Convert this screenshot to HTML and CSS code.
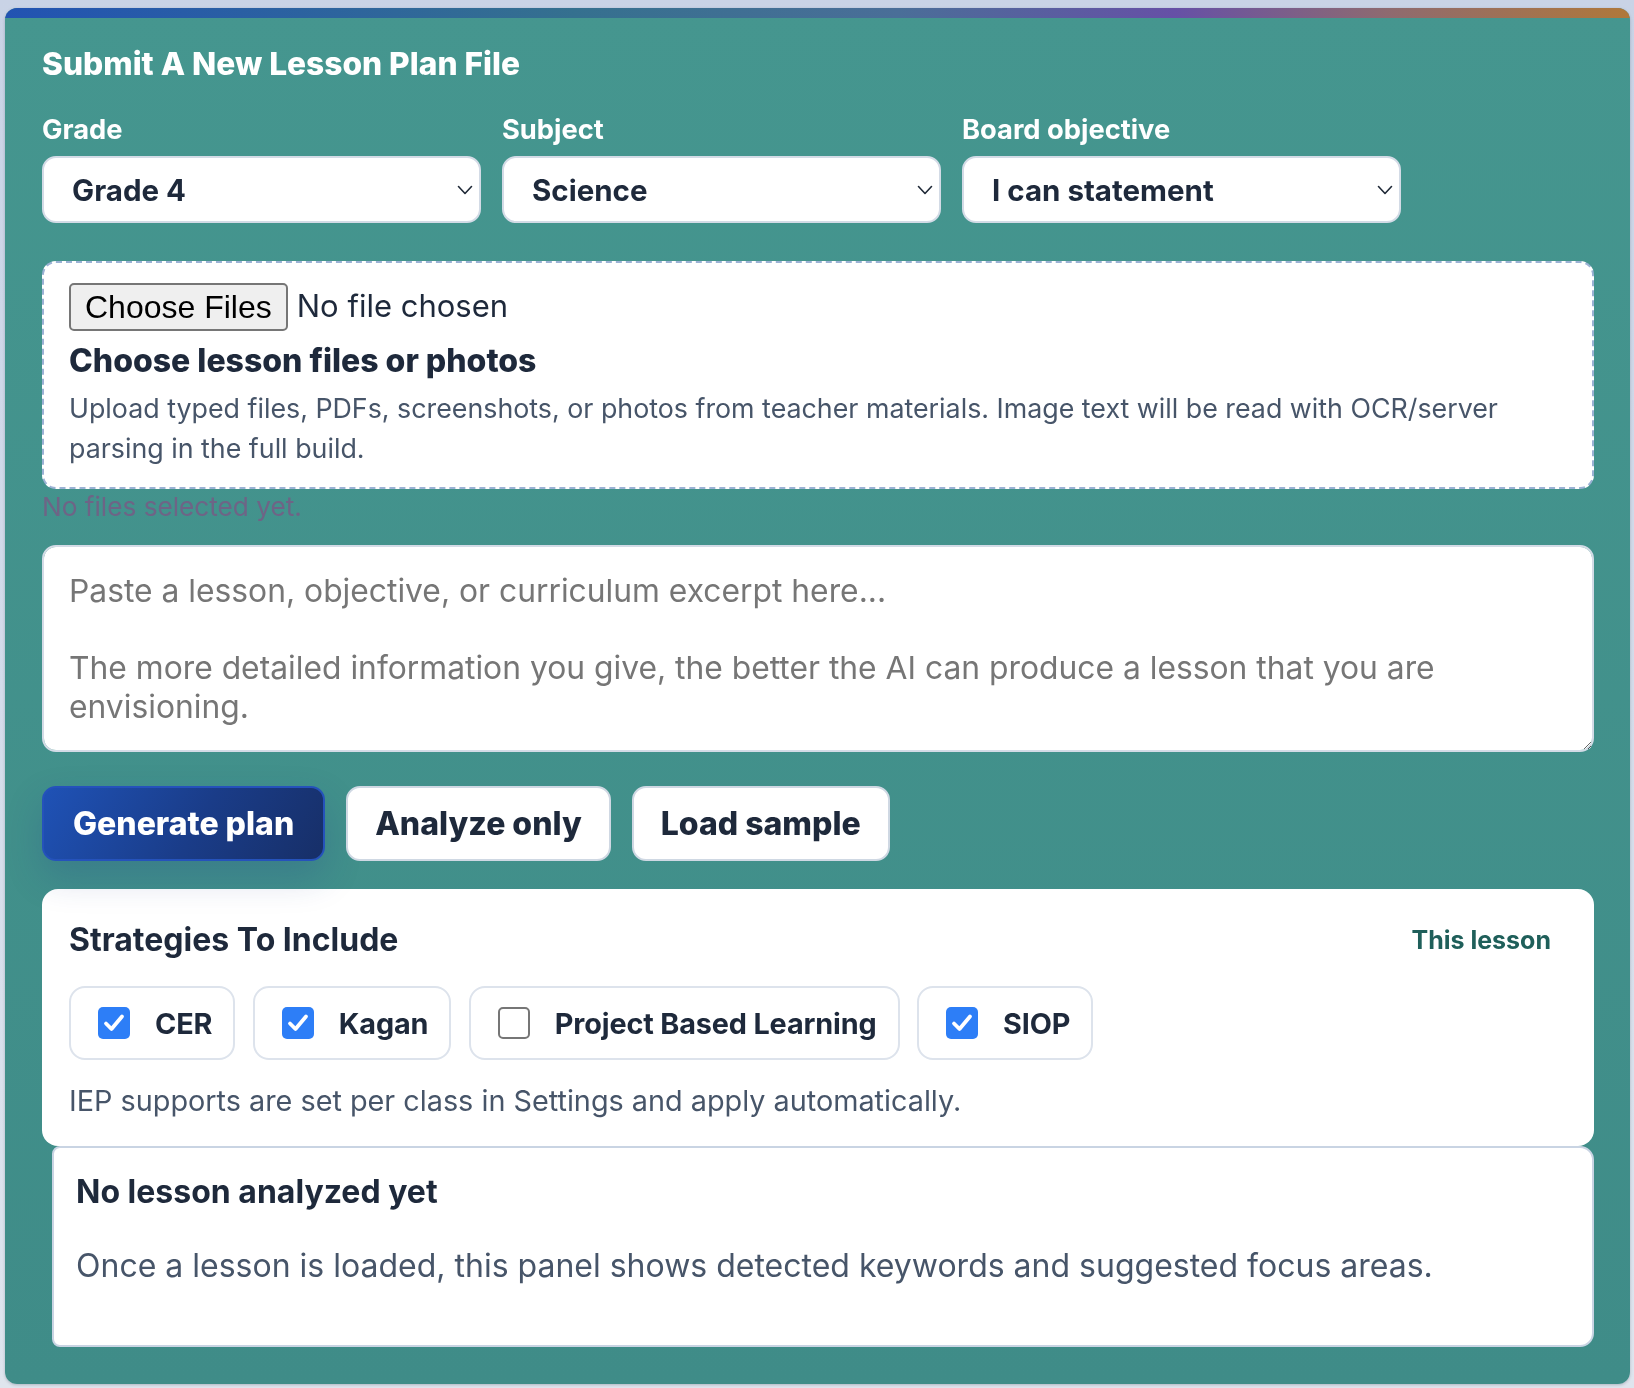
FILE: index.html
```html
<!DOCTYPE html>
<html lang="en">
<head>
<meta charset="utf-8">
<title>Submit A New Lesson Plan File</title>
<link rel="stylesheet" href="styles.css">
</head>
<body>
<main class="card">
  <div class="card-bar"></div>
  <div class="card-body">
    <h2 class="card-title">Submit A New Lesson Plan File</h2>

    <div class="field-row">
      <label class="field">
        <span class="field-label">Grade</span>
        <span class="select-wrap">
          <select class="select"><option>Grade 4</option></select>
          <svg class="chev" viewBox="0 0 16 10" width="16" height="10"><path d="M1.5 1.5 L8 8.5 L14.5 1.5" fill="none" stroke="#1f2937" stroke-width="1.6" stroke-linecap="round" stroke-linejoin="round"/></svg>
        </span>
      </label>
      <label class="field">
        <span class="field-label">Subject</span>
        <span class="select-wrap">
          <select class="select"><option>Science</option></select>
          <svg class="chev" viewBox="0 0 16 10" width="16" height="10"><path d="M1.5 1.5 L8 8.5 L14.5 1.5" fill="none" stroke="#1f2937" stroke-width="1.6" stroke-linecap="round" stroke-linejoin="round"/></svg>
        </span>
      </label>
      <label class="field">
        <span class="field-label">Board objective</span>
        <span class="select-wrap">
          <select class="select"><option>I can statement</option></select>
          <svg class="chev" viewBox="0 0 16 10" width="16" height="10"><path d="M1.5 1.5 L8 8.5 L14.5 1.5" fill="none" stroke="#1f2937" stroke-width="1.6" stroke-linecap="round" stroke-linejoin="round"/></svg>
        </span>
      </label>
    </div>

    <div class="dropzone">
      <div class="file-row">
        <span class="file-btn">Choose Files</span>
        <span class="file-name">No file chosen</span>
      </div>
      <h3 class="drop-title">Choose lesson files or photos</h3>
      <p class="drop-text">Upload typed files, PDFs, screenshots, or photos from teacher materials. Image text will be read with OCR/server parsing in the full build.</p>
    </div>
    <p class="file-status">No files selected yet.</p>

    <textarea class="lesson-text" placeholder="Paste a lesson, objective, or curriculum excerpt here...&#10;&#10;The more detailed information you give, the better the AI can produce a lesson that you are envisioning."></textarea>

    <div class="actions">
      <button class="btn btn-primary">Generate plan</button>
      <button class="btn">Analyze only</button>
      <button class="btn">Load sample</button>
    </div>

    <section class="panel strategies">
      <div class="panel-head">
        <h3 class="panel-title">Strategies To Include</h3>
        <span class="scope">This lesson</span>
      </div>
      <div class="chips">
        <label class="chip"><span class="box checked"><svg viewBox="0 0 32 32" width="32" height="32"><path d="M8 16.5 L13.5 22 L24 9.5" fill="none" stroke="#fff" stroke-width="3.8" stroke-linecap="round" stroke-linejoin="round"/></svg></span><span class="chip-text">CER</span></label>
        <label class="chip"><span class="box checked"><svg viewBox="0 0 32 32" width="32" height="32"><path d="M8 16.5 L13.5 22 L24 9.5" fill="none" stroke="#fff" stroke-width="3.8" stroke-linecap="round" stroke-linejoin="round"/></svg></span><span class="chip-text">Kagan</span></label>
        <label class="chip"><span class="box"></span><span class="chip-text">Project Based Learning</span></label>
        <label class="chip"><span class="box checked"><svg viewBox="0 0 32 32" width="32" height="32"><path d="M8 16.5 L13.5 22 L24 9.5" fill="none" stroke="#fff" stroke-width="3.8" stroke-linecap="round" stroke-linejoin="round"/></svg></span><span class="chip-text">SIOP</span></label>
      </div>
      <p class="note">IEP supports are set per class in Settings and apply automatically.</p>
    </section>

    <section class="panel results">
      <h3 class="results-title">No lesson analyzed yet</h3>
      <p class="results-text">Once a lesson is loaded, this panel shows detected keywords and suggested focus areas.</p>
    </section>
  </div>
</main>
</body>
</html>
```

FILE: styles.css
```css
* { box-sizing: border-box; }

html, body { height: 100%; }

body {
  margin: 0;
  padding: 8px 4px 5px 5px;
  background: linear-gradient(180deg, #c9d3e6 0%, #dfe5ee 100%);
  font-family: Inter, "Noto Sans", sans-serif;
  color: #1e293b;
}

.card {
  display: block;
  width: 1625px;
  border-radius: 12px;
  overflow: hidden;
  background: linear-gradient(180deg, #45968f 0%, #3f8c88 100%);
  box-shadow: 0 1px 3px rgba(30, 41, 59, 0.25);
}

.card-bar {
  height: 10px;
  background: linear-gradient(90deg, #2253b2 0%, #35708f 35%, #4a6e98 55%, #6650a6 72%, #8e6a70 85%, #b0783a 100%);
}

.card-body {
  padding: 29px 36px 37px 37px;
}

.card-title {
  margin: 0;
  font-size: 31.7px;
  line-height: 34px;
  font-weight: 800;
  color: #ffffff;
}

.field-row {
  display: grid;
  grid-template-columns: repeat(3, 439px);
  column-gap: 21px;
  margin-top: 34px;
}

.field {
  display: flex;
  flex-direction: column;
  gap: 12px;
}

.field-label {
  font-size: 27.3px;
  line-height: 29px;
  font-weight: 700;
  color: #ffffff;
}

.select-wrap {
  position: relative;
  display: block;
}

.select {
  appearance: none;
  -webkit-appearance: none;
  width: 100%;
  height: 67px;
  padding: 0 40px 0 28px;
  border: 2px solid #d3dbe6;
  border-radius: 14px;
  background: #ffffff;
  font-family: Inter, "Noto Sans", sans-serif;
  font-size: 29.5px;
  font-weight: 700;
  color: #1e293b;
}

.chev {
  position: absolute;
  right: 8px;
  top: 29px;
  pointer-events: none;
}

.dropzone {
  margin-top: 38px;
  padding: 20px 25px 19px 25px;
  border: 2px dashed #9bb2d4;
  border-radius: 14px;
  background: #ffffff;
}

.file-row {
  display: flex;
  align-items: center;
  gap: 9px;
  height: 48px;
}

.file-btn {
  display: inline-flex;
  align-items: center;
  height: 48px;
  padding: 0 14px;
  border: 2px solid #767676;
  border-radius: 5px;
  background: #efefef;
  font-family: "Liberation Sans", Arial, sans-serif;
  font-size: 32px;
  color: #000000;
}

.file-name {
  font-size: 31px;
  line-height: 40px;
  margin-top: -3px;
  color: #1e293b;
}

.drop-title {
  margin: 13px 0 0;
  font-size: 32px;
  line-height: 34px;
  font-weight: 800;
  color: #1e293b;
}

.drop-text {
  margin: 11px 0 0;
  font-size: 26.8px;
  line-height: 39.5px;
  color: #475569;
}

.file-status {
  margin: 3px 0 0;
  font-size: 26.2px;
  line-height: 29px;
  color: #6e6486;
}

.lesson-text {
  display: block;
  width: 100%;
  height: 207px;
  margin-top: 24px;
  padding: 25px 25px;
  border: 2px solid #d3dbe6;
  border-radius: 14px;
  background: #ffffff;
  font-family: Inter, "Noto Sans", sans-serif;
  font-size: 31.8px;
  line-height: 38.7px;
  color: #1e293b;
  resize: vertical;
}

.lesson-text::placeholder {
  color: #767676;
}

.actions {
  display: flex;
  gap: 21px;
  margin-top: 34px;
}

.btn {
  height: 75px;
  padding: 0 27px;
  border: 2px solid #cfd8e3;
  border-radius: 14px;
  background: #ffffff;
  font-family: Inter, "Noto Sans", sans-serif;
  font-size: 32px;
  font-weight: 800;
  color: #1e293b;
}

.btn-primary {
  padding: 0 29px;
  border-color: #2552bb;
  background: linear-gradient(120deg, #1f52b6 0%, #1a3c88 55%, #172f68 100%);
  color: #ffffff;
  box-shadow: 0 16px 36px rgba(30, 58, 138, 0.22);
}

.panel {
  background: #ffffff;
  border-radius: 16px;
}

.strategies {
  margin-top: 28px;
  padding: 32px 27px 25px 27px;
}

.panel-head {
  display: flex;
  align-items: center;
  justify-content: space-between;
}

.panel-title {
  margin: 0;
  font-size: 32px;
  line-height: 38px;
  font-weight: 700;
  color: #1e293b;
}

.scope {
  margin-right: 16px;
  font-size: 25px;
  font-weight: 700;
  color: #1f5f5a;
}

.chips {
  display: flex;
  gap: 17.5px;
  margin-top: 27px;
}

.chip {
  display: flex;
  align-items: center;
  height: 74px;
  padding: 0 21px 0 27px;
  border: 2px solid #dde3ec;
  border-radius: 16px;
  gap: 25px;
}

.box {
  display: block;
  width: 32px;
  height: 32px;
  border: 2px solid #767676;
  border-radius: 5px;
  background: #ffffff;
}

.box.checked {
  border: none;
  background: #2d7ef7;
}

.box svg { display: block; }

.chip-text {
  font-size: 28.8px;
  font-weight: 700;
  color: #1e293b;
  letter-spacing: -0.005em;
}

.note {
  margin: 21px 0 0;
  font-size: 28.8px;
  line-height: 40px;
  color: #475569;
}

.results {
  margin-left: 10px;
  padding: 25px 24px 57px 22px;
  border: 2px solid #c9d4e3;
  border-radius: 8px 14px 14px 8px;
}

.results-title {
  margin: 0;
  font-size: 32px;
  line-height: 38px;
  font-weight: 700;
  color: #1e293b;
}

.results-text {
  margin: 32px 0 0;
  font-size: 32px;
  line-height: 45px;
  color: #475569;
}
```
